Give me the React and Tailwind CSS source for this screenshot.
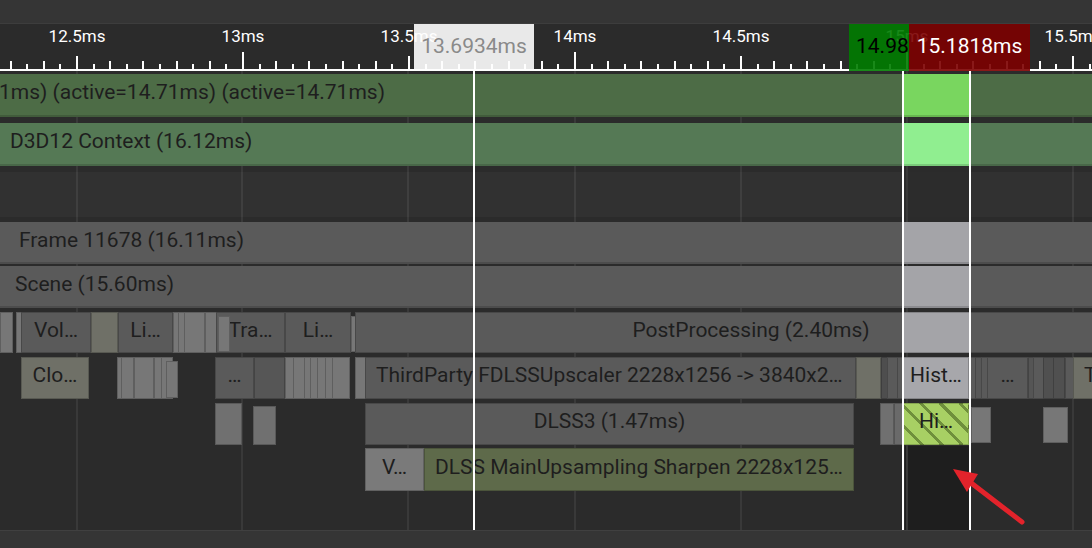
import React from "react";

const X = (n) => 77 + (n - 1250) * 3.32;

const ticks = [];
for (let k = 0; k <= 66; k++) {
  const n = 1230 + k * 5;
  ticks.push({
    x: X(n),
    h: n % 100 === 0 ? 17 : n % 50 === 0 ? 13 : n % 10 === 0 ? 8 : 5,
  });
}

const labels = [
  [1250, "12.5ms"],
  [1300, "13ms"],
  [1350, "13.5ms"],
  [1400, "14ms"],
  [1450, "14.5ms"],
  [1500, "15ms"],
  [1550, "15.5ms"],
];

const gridX = [76, 241, 407, 574, 740, 906, 1072];

const G = "bg-[#5a5a5a]";
const L = "bg-[#777777]";
const GG = "bg-[#6f7067]";
const H = "bg-[#a4a4a8]";

// events on the time axis, x in px
const row6 = [
  { l: 0, r: 13, c: L },
  { l: 16, r: 21, c: L },
  { l: 21, r: 91, c: G, t: "Vol…", center: true },
  { l: 91, r: 118, c: GG },
  { l: 118, r: 173, c: G, t: "Li…", center: true },
  { l: 173, r: 178, c: L },
  { l: 178, r: 184, c: L },
  { l: 184, r: 205, c: L },
  { l: 205, r: 214, c: L },
  { l: 216, r: 285, c: G, t: "Tra…", center: true },
  { l: 218, r: 223, c: L, y: "top-[4px] bottom-[1px]" },
  { l: 285, r: 351, c: G, t: "Li…", center: true },
  { l: 351, r: 356, c: L, y: "top-[4px] bottom-[1px]" },
  { l: 355, r: 1147, c: G, t: "PostProcessing (2.40ms)", center: true },
  { l: 903, r: 970, c: H },
];

const row7 = [
  { l: 21, r: 89, c: GG, t: "Clo…", center: true },
  { l: 117, r: 121, c: L },
  { l: 121, r: 134, c: L },
  { l: 134, r: 154, c: L },
  { l: 154, r: 161, c: L },
  { l: 161, r: 166, c: L },
  { l: 166, r: 173, c: L, y: "top-[4px] bottom-[1px]" },
  { l: 215, r: 254, c: G, t: "…", center: true },
  { l: 254, r: 285, c: "bg-[#565656]" },
  { l: 285, r: 293, c: L },
  { l: 293, r: 304, c: L },
  { l: 304, r: 310, c: L },
  { l: 310, r: 317, c: L },
  { l: 317, r: 325, c: L },
  { l: 325, r: 332, c: L },
  { l: 332, r: 350, c: L },
  { l: 355, r: 364, c: L },
  { l: 365, r: 856, c: G, t: "ThirdParty FDLSSUpscaler 2228x1256 -> 3840x2…" },
  { l: 856, r: 881, c: GG },
  { l: 881, r: 887, c: "bg-[#4e4e4e]" },
  { l: 887, r: 897, c: G },
  { l: 897, r: 903, c: G },
  { l: 903, r: 969, c: "bg-[#a7a7ab]", t: "Hist…", center: true },
  { l: 969, r: 975, c: G },
  { l: 975, r: 981, c: "bg-[#575757]" },
  { l: 981, r: 987, c: G },
  { l: 987, r: 1028, c: G, t: "…", center: true },
  { l: 1028, r: 1033, c: "bg-[#555555]" },
  { l: 1033, r: 1042, c: G },
  { l: 1043, r: 1053, c: "bg-[#505050]" },
  { l: 1053, r: 1063, c: "bg-[#505050]" },
  { l: 1065, r: 1073, c: G },
  { l: 1073, r: 1110, c: GG, t: "T" },
];

const row8 = [
  { l: 215, r: 242, c: "bg-[#707070]" },
  { l: 253, r: 276, c: "bg-[#707070]", y: "top-[3px] bottom-0" },
  { l: 365, r: 854, c: G, t: "DLSS3 (1.47ms)", center: true },
  { l: 880, r: 894, c: "bg-[#707070]" },
  { l: 894, r: 903, c: "bg-[#6a6a6a]" },
  {
    l: 903,
    r: 969,
    c: "border-[#7d9c47] bg-[repeating-linear-gradient(45deg,#a8d064_0px,#a8d064_11px,#6f8f3c_11px,#6f8f3c_14px)]",
    t: "Hi…",
    center: true,
  },
  { l: 971, r: 991, c: "bg-[#777777]", y: "top-[4px] bottom-[2px]" },
  { l: 1043, r: 1068, c: "bg-[#777777]", y: "top-[4px] bottom-[2px]" },
];

const row9 = [
  { l: 365, r: 424, c: "bg-[#7a7a7a]", t: "V…", center: true },
  { l: 424, r: 854, c: "bg-[#5e6a4a]", t: "DLSS MainUpsampling Sharpen 2228x125…" },
];

function Block({ b }) {
  return (
    <div
      className={`absolute flex items-center overflow-hidden whitespace-nowrap border border-black/20 pb-[4px] text-[21px] text-[#1e1e1e] ${b.c} ${
        b.center ? "justify-center" : "pl-[10px]"
      } ${b.y || "top-0 bottom-0"}`}
      style={{ left: b.l, width: b.r - b.l }}
    >
      {b.t}
    </div>
  );
}

function Track({ cls, items }) {
  return (
    <div className={`relative z-10 ${cls}`}>
      {items.map((b, i) => (
        <Block key={i} b={b} />
      ))}
    </div>
  );
}

function Bar({ cls, pad, text, hl }) {
  return (
    <div className={`relative z-10 flex items-center text-[21px] text-[#1e1e1e] ${cls}`}>
      {text && <span className={`pb-[5px] whitespace-nowrap ${pad}`}>{text}</span>}
      <div className={`absolute top-0 bottom-0 left-[903px] w-[67px] ${hl}`} />
      <div className="absolute inset-x-0 bottom-0 h-[2px] bg-black/15" />
    </div>
  );
}

export default function App() {
  return (
    <div className="w-[1092px] h-[548px] overflow-hidden bg-[#2b2b2b] flex flex-col font-['Roboto','Liberation_Sans',sans-serif]">
      {/* top strip */}
      <div className="h-6 shrink-0 bg-[#353535] border-b border-[#3d3d3d]" />

      {/* ruler */}
      <div className="relative h-[47px] shrink-0 bg-[#2b2b2b]">
        {labels.map(([n, t]) => (
          <div
            key={t}
            className="absolute top-[2px] -translate-x-1/2 text-[17px] leading-5 text-white"
            style={{ left: X(n) }}
          >
            {t}
          </div>
        ))}
        {ticks.map((k, i) => (
          <div
            key={i}
            className="absolute bottom-[2px] w-[2px] -translate-x-1/2 bg-white"
            style={{ left: k.x, height: k.h }}
          />
        ))}
        <div className="absolute inset-x-0 bottom-0 h-[2px] bg-white" />

        <div className="absolute top-0 bottom-0 left-[414px] w-[120px] bg-[#fefefe]/90 flex items-center justify-center pb-[2px] text-[21px] text-[#8a8a8a]">
          13.6934ms
        </div>
        <div className="absolute top-0 bottom-0 left-[849px] w-[60px] bg-[#007d00]/90 flex items-center pl-[7px] pb-[2px] overflow-hidden whitespace-nowrap text-[21px] text-black">
          14.98
        </div>
        <div className="absolute top-0 bottom-0 left-[909px] w-[121px] bg-[#7d0000]/90 flex items-center justify-center pb-[2px] text-[21px] text-white">
          15.1818ms
        </div>
      </div>

      {/* timeline */}
      <div className="relative h-[459px] shrink-0">
        <div className="absolute left-[905px] w-[64px] top-[375px] bottom-0 bg-[#1e1e1e]" />
        {gridX.map((x) => (
          <div key={x} className="absolute top-0 bottom-0 w-[2px] bg-[#393939]" style={{ left: x }} />
        ))}

        <div className="relative z-10 flex flex-col">
          <Bar cls="mt-[3px] h-[43px] bg-[#4d6c46]" pad="-ml-[1px]" text="1ms) (active=14.71ms) (active=14.71ms)" hl="bg-[#79d65f]" />
          <Bar cls="mt-[6px] h-[43px] bg-[#557955]" pad="pl-[10px]" text="D3D12 Context (16.12ms)" hl="bg-[#90ee90]" />
          <div className="relative mt-[6px] h-[45px] bg-white/[0.03]">
            <div className="absolute top-0 bottom-0 left-[903px] w-[67px] bg-black/10" />
          </div>
          <Bar cls="mt-[5px] h-[42px] bg-[#5a5a5a]" pad="pl-[19px]" text="Frame 11678 (16.11ms)" hl={H} />
          <Bar cls="mt-[2px] h-[42px] bg-[#5a5a5a]" pad="pl-[15px]" text="Scene (15.60ms)" hl={H} />
          <Track cls="mt-[4px] h-[41px]" items={row6} />
          <Track cls="mt-[4px] h-[42px]" items={row7} />
          <Track cls="mt-[4px] h-[42px]" items={row8} />
          <Track cls="mt-[3px] h-[43px]" items={row9} />
        </div>

        {/* cursors */}
        <div className="absolute z-20 top-0 bottom-0 left-[473px] w-[2px] bg-white" />
        <div className="absolute z-20 top-0 bottom-0 left-[902px] w-[2px] bg-white" />
        <div className="absolute z-20 top-0 bottom-0 left-[969px] w-[2px] bg-white" />

        <svg className="absolute inset-0 z-30 pointer-events-none" width="1092" height="459">
          <line x1="1022" y1="451" x2="966" y2="408" stroke="#e3232b" strokeWidth="5" strokeLinecap="round" />
          <polygon points="953,398 978,403 967,421" fill="#e3232b" />
        </svg>
      </div>

      {/* bottom strip */}
      <div className="h-[18px] shrink-0 bg-[#353535] border-t border-[#404040]" />
    </div>
  );
}
